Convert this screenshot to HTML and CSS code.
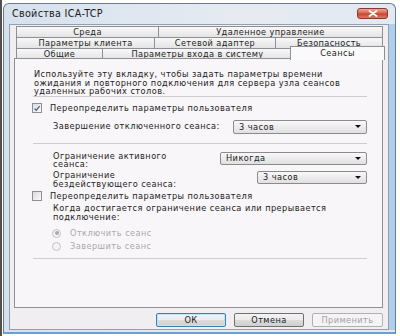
FILE: index.html
```html
<!DOCTYPE html>
<html lang="ru">
<head>
<meta charset="utf-8">
<title>Свойства ICA-TCP</title>
<link rel="stylesheet" href="styles.css">
</head>
<body>
<div class="screen">
<div class="window">
  <div class="titlebar">
    <span class="title">Свойства ICA-TCP</span>
    <span class="close"><svg width="10" height="7" viewBox="0 0 10 7"><path d="M1.5 1 L8.5 6 M8.5 1 L1.5 6" stroke="#fff" stroke-width="1.8" stroke-linecap="round"/></svg></span>
  </div>
  <div class="client">
    <div class="tabs">
      <div class="tabrow row1">
        <div class="tab">Среда</div>
        <div class="tab">Удаленное управление</div>
      </div>
      <div class="tabrow row2">
        <div class="tab">Параметры клиента</div>
        <div class="tab">Сетевой адаптер</div>
        <div class="tab">Безопасность</div>
      </div>
      <div class="tabrow row3">
        <div class="tab">Общие</div>
        <div class="tab">Параметры входа в систему</div>
        <div class="tab active">Сеансы</div>
      </div>
    </div>

    <div class="panel">
      <p class="desc">Используйте эту вкладку, чтобы задать параметры времени<br>ожидания и повторного подключения для сервера узла сеансов<br>удаленных рабочих столов.</p>
      <div class="sep sep1"></div>

      <div class="check check1">
        <span class="box"><svg width="9" height="9" viewBox="0 0 9 9"><path d="M1.8 4.6 L3.7 6.6 L7.4 1.8" fill="none" stroke="#3f5a8c" stroke-width="1.4"/></svg></span>
        Переопределить параметры пользователя
      </div>

      <div class="field field1">
        <span class="lbl">Завершение отключенного сеанса:</span>
        <div class="select w1"><span>3 часов</span><i class="arrow"></i></div>
      </div>

      <div class="sep sep2"></div>

      <div class="field field2">
        <span class="lbl">Ограничение активного<br>сеанса:</span>
        <div class="select w2"><span>Никогда</span><i class="arrow"></i></div>
      </div>

      <div class="field field3">
        <span class="lbl">Ограничение<br>бездействующего сеанса:</span>
        <div class="select w3"><span>3 часов</span><i class="arrow"></i></div>
      </div>

      <div class="check check2">
        <span class="box"></span>
        Переопределить параметры пользователя
      </div>

      <p class="note">Когда достигается ограничение сеанса или прерывается<br>подключение:</p>

      <div class="radio radio1"><span class="dot on"></span>Отключить сеанс</div>
      <div class="radio radio2"><span class="dot"></span>Завершить сеанс</div>

      <div class="sep sep3"></div>
    </div>

    <div class="buttons">
      <span class="btn default">ОК</span>
      <span class="btn">Отмена</span>
      <span class="btn disabled">Применить</span>
    </div>
  </div>
</div>
</div>
</body>
</html>
```

FILE: styles.css
```css
*{box-sizing:border-box;margin:0;padding:0;}
body{background:#fff;font-family:"DejaVu Sans",sans-serif;font-size:8.2px;color:#222;}

.screen{height:336px;border-left:2px solid #505050;padding:3px 4px 1px 1px;}
.window{height:331px;display:flex;flex-direction:column;border:1px solid #6b7c92;border-bottom:2px solid #6d9fd4;border-radius:6px 6px 0 0;background:linear-gradient(to right,#d6e1ee,#e6ebf1 60%,#e2e9f1);padding:0 6px 2px 5px;}

.titlebar{height:20px;display:flex;justify-content:space-between;align-items:flex-start;padding:0 1px 0 3px;}
.title{font-size:9.6px;line-height:20px;color:#1b1b1b;letter-spacing:.3px;}
.close{width:31px;height:11px;margin-top:4px;border:1px solid #8a3a32;border-radius:3px;background:linear-gradient(#eaa89a,#d8644f 45%,#c9432f 55%,#e07a62);display:flex;align-items:center;justify-content:center;}

.client{flex:1;display:flex;flex-direction:column;border:1px solid #94a0ae;background:#f1eef1;padding:1px 5px 0 4px;box-shadow:6px 0 0 #b0cfef;}

.tabs{margin-left:2px;}
.tabrow{display:grid;height:11px;}
.row1{grid-template-columns:142px 225px;}
.row2{grid-template-columns:138px 121px 108px;}
.row3{grid-template-columns:86px 190px 91px;height:10px;}
.tab{border:1px solid #8e9097;border-bottom:0;border-right:0;background:linear-gradient(#f8f8f8,#e4e4e4);text-align:center;line-height:10px;color:#1e1e1e;letter-spacing:.4px;white-space:nowrap;}
.tab:last-child{border-right:1px solid #8e9097;}
.tab.active{position:relative;z-index:1;margin:-2px -2px -1px -2px;border-right:1px solid #8e9097;background:#fbfafb;line-height:12px;}

.panel{height:250px;border:1px solid #8e9097;background:#f8f6f8;padding:11px 15px 0 17px;}
.desc,.note,.lbl{line-height:8.6px;letter-spacing:.45px;}
.desc{margin-left:2px;}
.sep{border-top:1px solid #cfcbcf;margin-left:1px;}
.sep2{margin-top:9px;}
.sep3{margin-top:7px;}

.check{display:flex;align-items:center;height:10px;letter-spacing:.45px;}
.check1{margin-top:6px;}
.check2{margin-top:3px;}
.box{width:10px;height:10px;margin-right:8px;border:1px solid #8f9092;background:linear-gradient(135deg,#d9dadb,#fbfbfb);display:flex;}

.field{display:flex;align-items:flex-start;padding-left:21px;}
.field1{margin-top:7px;align-items:center;}
.field2{margin-top:8px;}
.field3{margin-top:2px;}
.select{margin-left:auto;height:13px;display:flex;align-items:center;justify-content:space-between;border:1px solid #8b8b8b;border-radius:2px;background:linear-gradient(#f8f8f8,#ececec 50%,#e0e0e0);padding:0 5px;letter-spacing:.45px;}
.field1 .select{height:14px;}
.w1{width:134px;}
.w2{width:147px;}
.w3{width:110px;}
.arrow{width:0;height:0;border-left:3px solid transparent;border-right:3px solid transparent;border-top:3px solid #111;}

.note{margin-top:3px;padding-left:21px;}
.radio{display:flex;align-items:center;height:10px;padding-left:20px;color:#a9a9a9;letter-spacing:.45px;}
.radio1{margin-top:7px;}
.radio2{margin-top:3px;}
.dot{width:9px;height:9px;margin-right:9px;border:1px solid #c3c3c3;border-radius:50%;background:#f3f3f3;display:flex;align-items:center;justify-content:center;}
.dot.on::after{content:"";width:4px;height:4px;border-radius:50%;background:#aaa;}

.buttons{display:flex;justify-content:flex-end;gap:8px;margin-top:5px;}
.btn{width:70px;height:14px;border:1px solid #707070;border-radius:2px;background:linear-gradient(#f3f3f3,#ebebeb 50%,#dcdcdc 51%,#d0d0d0);text-align:center;line-height:12px;letter-spacing:.45px;color:#1b1b1b;}
.btn.default{border-color:#3c7fb1;box-shadow:inset 0 0 0 1px #bfe4f6;}
.btn.disabled{width:71px;border-color:#adb2b5;background:#f4f4f4;color:#a3a3a3;}
```
